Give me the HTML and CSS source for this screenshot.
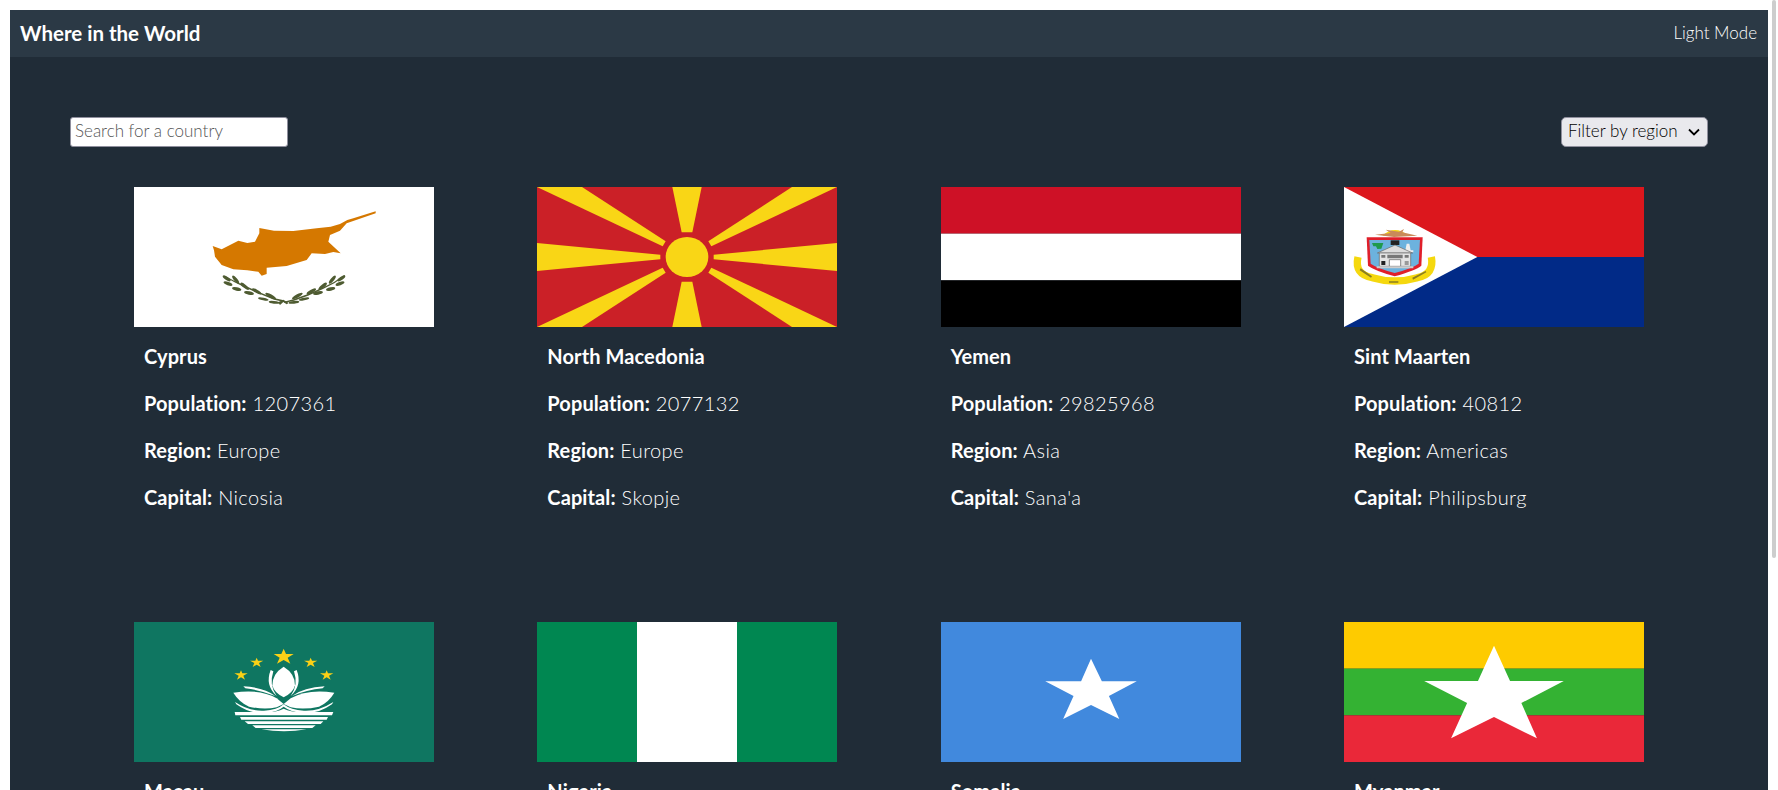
FILE: index.html
```html
<!DOCTYPE html>
<html>
<head>
    <link rel="stylesheet" href="styles.css">
</head>
<body>
    <header class="top-bar">
        <h1>Where in the World</h1>
        <span class="mode-toggle">Light Mode</span>
    </header>

    <main class="content">
        <div class="controls">
            <input type="text" class="search" placeholder="Search for a country">
            <select class="region-filter">
                <option>Filter by region</option>
            </select>
        </div>

        <div class="country-grid">
            <div class="card">
                <svg class="flag" viewBox="0 0 900 420" preserveAspectRatio="none">
                    <rect width="900" height="420" fill="#fff"/>
                    <path fill="#d57800" d="M725 73L658 94L640 99L618 111L590 119L548 124L478 132L420 131L376 123L376 139L363 164L340 168L313 161L288 174L263 187L236 177L240 190L243 209L263 234L298 247L340 250L373 254L383 266L398 261L398 242L458 237L518 219L533 199L573 201L598 195L620 199L583 164L588 144L618 131L638 109L725 79Z"/>
                    <g fill="#4e5b31">
                        <path d="M448 344L420 338L380 322L335 302L300 285L270 268L272 266L302 282L337 298L382 318L422 334L450 340Z"/>
                        <path d="M450 344L478 337L520 322L565 302L600 285L631 264L633 266L602 288L567 306L522 326L480 341L452 348Z"/>
                        <ellipse cx="278" cy="274" rx="14" ry="5" transform="rotate(35 278 274)"/>
                        <ellipse cx="282" cy="290" rx="14" ry="5" transform="rotate(20 282 290)"/>
                        <ellipse cx="305" cy="278" rx="15" ry="5" transform="rotate(50 305 278)"/>
                        <ellipse cx="308" cy="306" rx="14" ry="5" transform="rotate(12 308 306)"/>
                        <ellipse cx="332" cy="298" rx="16" ry="5" transform="rotate(40 332 298)"/>
                        <ellipse cx="345" cy="318" rx="15" ry="5" transform="rotate(12 345 318)"/>
                        <ellipse cx="368" cy="313" rx="16" ry="5" transform="rotate(30 368 313)"/>
                        <ellipse cx="388" cy="336" rx="16" ry="4" transform="rotate(12 388 336)"/>
                        <ellipse cx="410" cy="327" rx="18" ry="5" transform="rotate(28 410 327)"/>
                        <ellipse cx="420" cy="346" rx="16" ry="4" transform="rotate(6 420 346)"/>
                        <ellipse cx="622" cy="274" rx="14" ry="5" transform="rotate(-35 622 274)"/>
                        <ellipse cx="618" cy="290" rx="14" ry="5" transform="rotate(-20 618 290)"/>
                        <ellipse cx="595" cy="278" rx="15" ry="5" transform="rotate(-50 595 278)"/>
                        <ellipse cx="590" cy="306" rx="14" ry="5" transform="rotate(-12 590 306)"/>
                        <ellipse cx="566" cy="298" rx="16" ry="5" transform="rotate(-40 566 298)"/>
                        <ellipse cx="552" cy="318" rx="15" ry="5" transform="rotate(-12 552 318)"/>
                        <ellipse cx="532" cy="313" rx="16" ry="5" transform="rotate(-30 532 313)"/>
                        <ellipse cx="510" cy="336" rx="16" ry="4" transform="rotate(-12 510 336)"/>
                        <ellipse cx="490" cy="327" rx="18" ry="5" transform="rotate(-28 490 327)"/>
                        <ellipse cx="480" cy="346" rx="16" ry="4" transform="rotate(-6 480 346)"/>
                        <path d="M432 346L448 338L464 348L458 352L448 345L438 354Z"/>
                    </g>
                </svg>
                <div class="info">
                    <p class="name">Cyprus</p>
                    <p><b>Population:</b> 1207361</p>
                    <p><b>Region:</b> Europe</p>
                    <p><b>Capital:</b> Nicosia</p>
                </div>
            </div>

            <div class="card">
                <svg class="flag" viewBox="0 0 900 420" preserveAspectRatio="none">
                    <rect width="900" height="420" fill="#cb2027"/>
                    <g fill="#f9d616">
                        <path d="M406 0H494L466 136H434Z"/>
                        <path d="M406 420H494L466 284H434Z"/>
                        <path d="M0 168L370 203V217L0 252Z"/>
                        <path d="M900 168L530 203V217L900 252Z"/>
                        <path d="M0 0H135L386 163L377 178Z"/>
                        <path d="M900 0H765L514 163L523 178Z"/>
                        <path d="M0 420H135L386 257L377 242Z"/>
                        <path d="M900 420H765L514 257L523 242Z"/>
                        <ellipse cx="450" cy="210" rx="64" ry="60"/>
                    </g>
                </svg>
                <div class="info">
                    <p class="name">North Macedonia</p>
                    <p><b>Population:</b> 2077132</p>
                    <p><b>Region:</b> Europe</p>
                    <p><b>Capital:</b> Skopje</p>
                </div>
            </div>

            <div class="card">
                <svg class="flag" viewBox="0 0 900 420" preserveAspectRatio="none">
                    <rect width="900" height="140" fill="#ce1126"/>
                    <rect y="140" width="900" height="140" fill="#fff"/>
                    <rect y="280" width="900" height="140" fill="#000"/>
                </svg>
                <div class="info">
                    <p class="name">Yemen</p>
                    <p><b>Population:</b> 29825968</p>
                    <p><b>Region:</b> Asia</p>
                    <p><b>Capital:</b> Sana'a</p>
                </div>
            </div>

            <div class="card">
                <svg class="flag" viewBox="0 0 900 420" preserveAspectRatio="none">
                    <rect width="900" height="210" fill="#dc171d"/>
                    <rect y="210" width="900" height="210" fill="#012a87"/>
                    <path fill="#fff" d="M0 0L400 210L0 420Z"/>
                    <path fill="#f5d80e" d="M115 146Q152 112 194 146Z"/>
                    <path fill="#c98a5a" d="M93 143L140 138L125 128L165 134L180 126L175 136L220 146L150 150Z"/>
                    <path fill="none" stroke="#f5d80e" stroke-width="22" d="M42 210Q30 262 85 272Q152 292 220 272Q272 262 262 210"/>
                    <path fill="#8a7d22" d="M50 244l34 24l-3 4l-34-22ZM135 283h28v4h-28ZM205 272l40-20l2 4l-40 22Z"/>
                    <path fill="#e01f2a" d="M68 151H236L232 236Q215 250 152 268Q90 250 72 236Z"/>
                    <path fill="#6cb2de" d="M76 159H228L224 230Q205 244 152 258Q100 244 80 230Z"/>
                    <path fill="#1f9a4c" d="M84 168H118L112 185L100 186L96 178H88Z"/>
                    <path fill="#eee" d="M188 170H196L200 190H208V196H176V190H184Z"/>
                    <path fill="#222" d="M140 160H166V174H140Z"/>
                    <path fill="#ddd" stroke="#666" stroke-width="2" d="M100 198L153 174L206 198Z"/>
                    <path fill="#e4e4e4" stroke="#666" stroke-width="2" d="M106 198H200V238H106Z"/>
                    <path fill="#777" d="M130 203H176V214H130ZM112 204H124V212H112ZM182 204H194V212H182Z"/>
                    <path fill="#fff" stroke="#555" stroke-width="2" d="M136 218H170V238H136Z"/>
                    <path fill="#222" d="M112 222H124V234H112Z"/>
                    <path fill="#999" d="M182 222H194V234H182Z"/>
                    <path fill="#ccc" d="M98 238H208V244H98Z"/>
                </svg>
                <div class="info">
                    <p class="name">Sint Maarten</p>
                    <p><b>Population:</b> 40812</p>
                    <p><b>Region:</b> Americas</p>
                    <p><b>Capital:</b> Philipsburg</p>
                </div>
            </div>

            <div class="card">
                <svg class="flag" viewBox="0 0 900 420" preserveAspectRatio="none">
                    <rect width="900" height="420" fill="#0f7661"/>
                    <g fill="#fbd116">
                        <path d="M449 80L456 96L479 96L461 107L469 125L449 114L429 125L437 107L419 96L442 96Z"/>
                        <path d="M368 107L372 116L388 116L375 123L380 135L368 128L356 135L361 123L348 116L364 116Z"/>
                        <path d="M530 107L534 116L550 116L537 123L542 135L530 128L518 135L523 123L510 116L526 116Z"/>
                        <path d="M321 145L325 154L341 154L328 161L333 173L321 166L309 173L314 161L301 154L317 154Z"/>
                        <path d="M578 145L582 154L598 154L585 161L590 173L578 166L566 173L571 161L558 154L574 154Z"/>
                    </g>
                    <g fill="#fff">
                        <path d="M449 134Q483 155 483 190Q478 212 449 226Q420 212 415 190Q415 155 449 134Z"/>
                        <path d="M410 144L418 148Q404 190 428 222Q392 190 410 144Z"/>
                        <path d="M488 144L480 148Q494 190 470 222Q506 190 488 144Z"/>
                        <path d="M328 193Q390 196 424 222Q380 204 334 199Z"/>
                        <path d="M572 193Q510 196 474 222Q518 204 566 199Z"/>
                        <path d="M298 212Q380 200 428 229L449 246L428 256Q390 264 345 254Q315 240 298 212Z"/>
                        <path d="M601 212Q520 200 470 229L449 246L470 256Q510 264 555 254Q585 240 601 212Z"/>
                        <path d="M303 240Q345 268 390 266Q430 264 449 247Q470 264 510 266Q555 268 598 240L594 247Q550 278 505 272Q470 270 449 254Q430 270 395 272Q350 278 307 247Z"/>
                        <path d="M302 270H395Q425 272 449 260Q475 272 505 270H598L594 280H304Z"/>
                        <path d="M318 285H582L578 293H322Z"/>
                        <path d="M332 298H568L560 306H342Z"/>
                        <path d="M355 310H545L535 318H365Z"/>
                        <path d="M382 322H518Q450 334 382 322Z"/>
                    </g>
                </svg>
                <div class="info">
                    <p class="name">Macau</p>
                    <p><b>Population:</b> 649342</p>
                    <p><b>Region:</b> Asia</p>
                    <p><b>Capital:</b> </p>
                </div>
            </div>

            <div class="card">
                <svg class="flag" viewBox="0 0 900 420" preserveAspectRatio="none">
                    <rect width="900" height="420" fill="#008751"/>
                    <rect x="300" width="300" height="420" fill="#fff"/>
                </svg>
                <div class="info">
                    <p class="name">Nigeria</p>
                    <p><b>Population:</b> 206139587</p>
                    <p><b>Region:</b> Africa</p>
                    <p><b>Capital:</b> Abuja</p>
                </div>
            </div>

            <div class="card">
                <svg class="flag" viewBox="0 0 636 420" preserveAspectRatio="none">
                    <rect width="636" height="420" fill="#4189dd"/>
                    <path fill="#fff" d="M318 110L341 178H415L356 222L378 291L318 249L259 291L281 222L221 178H297Z"/>
                </svg>
                <div class="info">
                    <p class="name">Somalia</p>
                    <p><b>Population:</b> 15893222</p>
                    <p><b>Region:</b> Africa</p>
                    <p><b>Capital:</b> Mogadishu</p>
                </div>
            </div>

            <div class="card">
                <svg class="flag" viewBox="0 0 636 420" preserveAspectRatio="none">
                    <rect width="636" height="140" fill="#fecb00"/>
                    <rect y="140" width="636" height="140" fill="#34b233"/>
                    <rect y="280" width="636" height="140" fill="#ea2839"/>
                    <path fill="#fff" d="M318 71L352 177H466L376 243L409 349L318 285L227 349L261 243L170 177H284Z"/>
                </svg>
                <div class="info">
                    <p class="name">Myanmar</p>
                    <p><b>Population:</b> 54409794</p>
                    <p><b>Region:</b> Asia</p>
                    <p><b>Capital:</b> Naypyidaw</p>
                </div>
            </div>
        </div>
    </main>

    <div class="scroll-thumb"></div>
</body>
</html>
```

FILE: styles.css
```css
html {
    scrollbar-width: none;
}
body {
    margin: 10px;
    background-color: #fff;
    font-family: "Lato", "Open Sans", sans-serif;
    font-weight: 300;
    color: #fff;
}
.top-bar {
    height: 47px;
    padding: 0 11px 2px 10px;
    box-sizing: border-box;
    display: flex;
    align-items: center;
    justify-content: space-between;
    background-color: #2b3945;
    font-size: 17px;
}
.top-bar h1 {
    margin: 0;
    font-size: 20.5px;
    font-weight: 700;
}
.content {
    padding: 60px 60px 40px;
    background-color: #202c37;
}
.controls {
    display: flex;
    justify-content: space-between;
    align-items: center;
    margin-bottom: 40px;
}
.search {
    width: 218px;
    height: 30px;
    padding: 0 4px 4px;
    box-sizing: border-box;
    border: 1px solid #8f8f9d;
    border-radius: 3px;
    background-color: #fff;
    font-family: inherit;
    font-size: 17px;
    font-weight: 300;
}
.search::placeholder {
    color: #555;
}
.region-filter {
    width: 147px;
    height: 30px;
    padding: 0 0 4px 6px;
    box-sizing: border-box;
    border: 1px solid #8f8f9d;
    border-radius: 5px;
    background-color: #e9e9ed;
    color: #000;
    font-family: inherit;
    font-size: 17px;
    font-weight: 300;
    appearance: none;
    background-image: url("data:image/svg+xml,%3Csvg xmlns='http://www.w3.org/2000/svg' width='12' height='8'%3E%3Cpath d='M1 1.5L6 6.5L11 1.5' fill='none' stroke='%23000' stroke-width='1.8'/%3E%3C/svg%3E");
    background-repeat: no-repeat;
    background-position: right 7px center;
}
.country-grid {
    padding: 0 64px;
    display: grid;
    grid-template-columns: repeat(4, 300px);
    justify-content: space-between;
    row-gap: 91px;
}
.flag {
    display: block;
    width: 300px;
    height: 140px;
}
.info {
    padding: 16px 0 0 10px;
    font-size: 20px;
    line-height: 27px;
    letter-spacing: 0.4px;
}
.info p {
    margin: 0 0 20px;
}
.info b,
.name {
    font-weight: 700;
    letter-spacing: 0.1px;
}
.scroll-thumb {
    position: fixed;
    top: 0;
    right: 2px;
    width: 4px;
    height: 558px;
    background-color: #cdcdcd;
    border-radius: 2px;
}
```
